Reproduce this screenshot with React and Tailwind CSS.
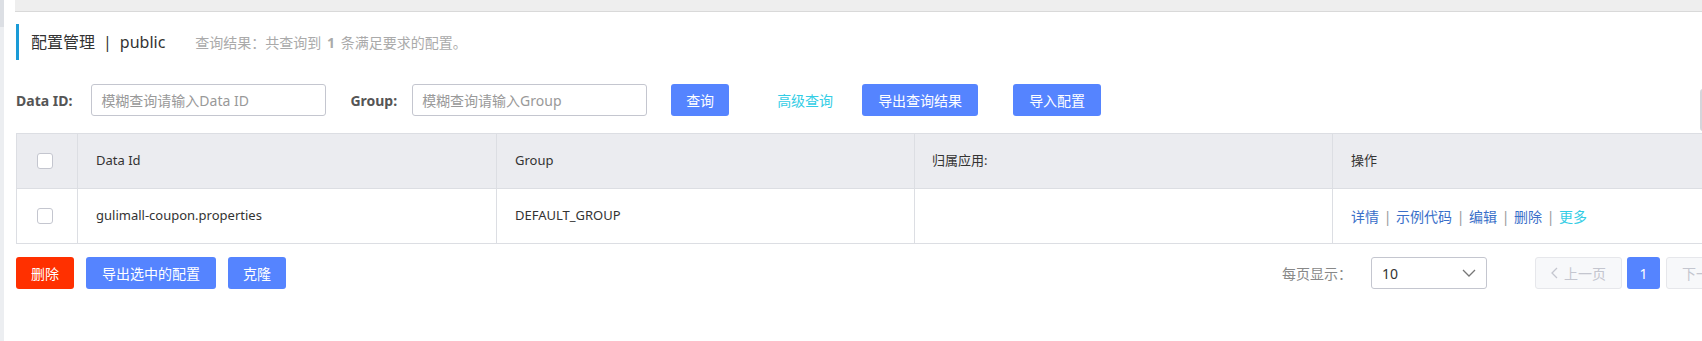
import React from 'react';

const Checkbox = () => (
  <span className="block w-[16px] h-[16px] rounded-[3px] border border-[#c4c6cf] bg-white" />
);

const Sep = () => <span className="inline-block w-[17px] text-center text-[#999]">|</span>;

export default function App() {
  const actions = ['详情', '示例代码', '编辑', '删除'];

  return (
    <div className="w-[1702px] h-[341px] overflow-hidden bg-white flex whitespace-nowrap font-['Noto_Sans','Noto_Sans_CJK_SC',sans-serif]">
      {/* left rail */}
      <div className="w-[4px] shrink-0 flex flex-col">
        <div className="h-[27px] bg-[#dcdfe4]" />
        <div className="flex-1 bg-[#eceef1]" />
      </div>
      <div className="w-[11px] shrink-0" />

      <div className="flex-1 min-w-0">
        {/* top bar */}
        <div className="h-[12px] bg-[#eeeeee] border-b border-[#d9d9d9]" />

        {/* title */}
        <div className="mt-[12px] h-[36px] flex items-center">
          <div className="ml-[1px] w-[3px] h-full bg-[#1a9bd7]" />
          <span className="ml-[12px] text-[16px] text-[#333]">配置管理</span>
          <span className="mx-[8px] text-[16px] text-[#333]">|</span>
          <span className="text-[16px] text-[#333]">public</span>
          <span className="ml-[30px] text-[14px] text-[#aaa]">
            查询结果：共查询到 <b className="font-bold mx-[2px]">1</b> 条满足要求的配置。
          </span>
        </div>

        {/* search row */}
        <div className="mt-[24px] h-[32px] flex items-center text-[14px] [&>*]:shrink-0">
          <span className="ml-[1px] font-bold text-[#555]">Data ID:</span>
          <div className="ml-[19px] w-[235px] h-[32px] rounded-[3px] border border-[#c4c6cf] flex items-center px-[9px] text-[#999]">
            模糊查询请输入Data ID
          </div>
          <span className="ml-[24px] font-bold text-[#555]">Group:</span>
          <div className="ml-[15px] w-[235px] h-[32px] rounded-[3px] border border-[#c4c6cf] flex items-center px-[9px] text-[#999]">
            模糊查询请输入Group
          </div>
          <button className="ml-[24px] h-[32px] px-[15px] rounded-[3px] bg-[#5584ff] text-white">查询</button>
          <span className="ml-[48px] text-[#33cde5]">高级查询</span>
          <button className="ml-[29px] h-[32px] px-[16px] rounded-[3px] bg-[#5584ff] text-white">导出查询结果</button>
          <button className="ml-[35px] h-[32px] px-[16px] rounded-[3px] bg-[#5584ff] text-white">导入配置</button>
          <div className="ml-[599px] self-start mt-[5px] w-[40px] h-[42px] rounded-[3px] border-2 border-[#d4d6db]" />
        </div>

        {/* table */}
        <div className="mt-[17px] ml-[1px] w-[1736px] border-t border-l border-[#dcdee3] text-[13px] text-[#333]">
          <div className="grid grid-cols-[61px_419px_418px_418px_420px] h-[55px] bg-[#ebecf0] border-b border-[#dcdee3]">
            <div className="border-r border-[#dcdee3] flex items-center pl-[20px]">
              <Checkbox />
            </div>
            <div className="border-r border-[#dcdee3] flex items-center pl-[18px]">Data Id</div>
            <div className="border-r border-[#dcdee3] flex items-center pl-[18px]">Group</div>
            <div className="border-r border-[#dcdee3] flex items-center pl-[17px]">归属应用:</div>
            <div className="flex items-center pl-[18px]">操作</div>
          </div>
          <div className="grid grid-cols-[61px_419px_418px_418px_420px] h-[55px] border-b border-[#dcdee3]">
            <div className="border-r border-[#dcdee3] flex items-center pl-[20px]">
              <Checkbox />
            </div>
            <div className="border-r border-[#dcdee3] flex items-center pl-[18px]">gulimall-coupon.properties</div>
            <div className="border-r border-[#dcdee3] flex items-center pl-[18px]">DEFAULT_GROUP</div>
            <div className="border-r border-[#dcdee3]" />
            <div className="flex items-center pl-[18px] text-[14px]">
              {actions.map((a) => (
                <React.Fragment key={a}>
                  <span className="text-[#3a6fc9]">{a}</span>
                  <Sep />
                </React.Fragment>
              ))}
              <span className="text-[#33cde5]">更多</span>
            </div>
          </div>
        </div>

        {/* bottom row */}
        <div className="mt-[13px] h-[32px] flex items-center text-[14px] [&>*]:shrink-0">
          <button className="ml-[1px] h-[32px] px-[15px] rounded-[3px] bg-[#ff3000] text-white">删除</button>
          <button className="ml-[12px] h-[32px] px-[16px] rounded-[3px] bg-[#5584ff] text-white">导出选中的配置</button>
          <button className="ml-[12px] h-[32px] px-[15px] rounded-[3px] bg-[#5584ff] text-white">克隆</button>

          <span className="ml-[996px] text-[#888]">每页显示：</span>
          <div className="ml-[19px] w-[116px] h-[32px] rounded-[3px] border border-[#c4c6cf] flex items-center justify-between pl-[10px] pr-[10px] text-[#333]">
            <span>10</span>
            <svg width="14" height="8" viewBox="0 0 14 8" fill="none">
              <path d="M1 1l6 6 6-6" stroke="#777" strokeWidth="1.3" />
            </svg>
          </div>
          <div className="ml-[48px] w-[87px] h-[32px] rounded-[3px] border border-[#e6e7eb] bg-[#f7f8fa] flex items-center justify-center gap-[6px] text-[#c4c6cf]">
            <svg width="7" height="12" viewBox="0 0 7 12" fill="none">
              <path d="M6 1L1 6l5 5" stroke="#c4c6cf" strokeWidth="1.3" />
            </svg>
            <span>上一页</span>
          </div>
          <div className="ml-[5px] w-[33px] h-[32px] rounded-[3px] bg-[#5584ff] text-white flex items-center justify-center">1</div>
          <div className="ml-[6px] w-[87px] h-[32px] rounded-[3px] border border-[#e6e7eb] bg-[#f7f8fa] flex items-center justify-center gap-[6px] text-[#c4c6cf]">
            <span>下一页</span>
            <svg width="7" height="12" viewBox="0 0 7 12" fill="none">
              <path d="M1 1l5 5-5 5" stroke="#c4c6cf" strokeWidth="1.3" />
            </svg>
          </div>
        </div>
      </div>
    </div>
  );
}
